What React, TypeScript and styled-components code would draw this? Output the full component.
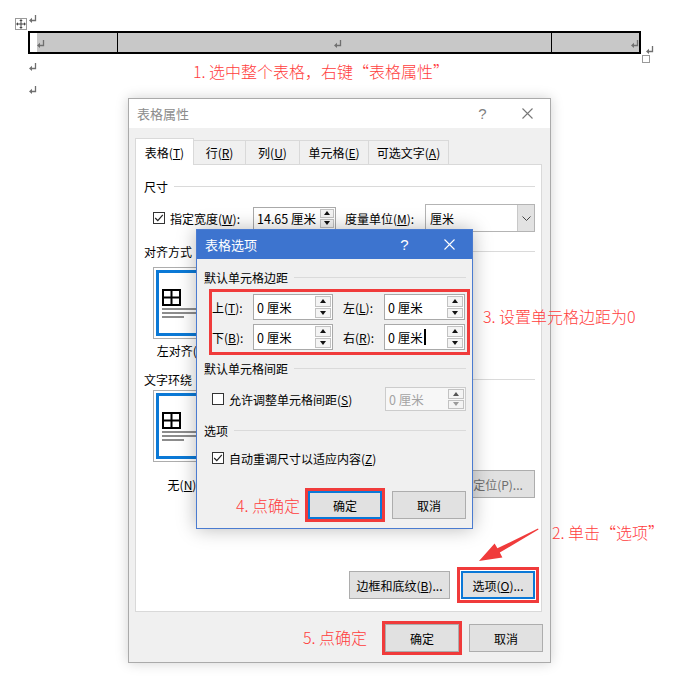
import styled, { createGlobalStyle } from "styled-components";

const markRed = "#f03b3b";
const noteRed = "#ff3d3d";

const GlobalStyle = createGlobalStyle`
  html, body { margin: 0; padding: 0; background: #ffffff; }
  body {
    font-family: "Noto Sans CJK SC", "Liberation Sans", sans-serif;
    font-size: 12px;
    color: #000;
  }
  * { box-sizing: border-box; }
`;

const Page = styled.div`
  position: relative;
  width: 677px;
  height: 679px;
  overflow: hidden;
  background: #fff;
`;

/* ---------- document ---------- */

const Doc = styled.div`
  display: flex;
  flex-direction: column;
  padding: 14px 0 0 28px;
`;

const ParaLine = styled.div<{ $height: number; $top: number }>`
  height: ${(p) => p.$height}px;
  padding: ${(p) => p.$top}px 0 0 1px;
  display: flex;
  align-items: flex-start;
`;

const TableWrap = styled.div`
  position: relative;
  width: 613px;
  height: 23px;
  border: 2px solid #000;
  display: grid;
  grid-template-columns: 87px 434px 1fr;
`;

const Cell = styled.div<{ $lead?: boolean; $align: string }>`
  display: flex;
  justify-content: ${(p) => p.$align};
  align-items: flex-start;
  padding: 7px 0 0 7px;
  background: ${(p) =>
    p.$lead ? "linear-gradient(to right, #fff 7px, #c8c8c8 7px)" : "#c8c8c8"};
  & + & {
    border-left: 1px solid #000;
  }
`;

const MoveHandle = styled.div`
  position: absolute;
  left: -15px;
  top: -15px;
  width: 12px;
  height: 12px;
  border: 1px solid #9a9a9a;
  background: #fff;
  display: flex;
  align-items: center;
  justify-content: center;
`;

const RowEnd = styled.div`
  position: absolute;
  left: 616px;
  top: 7px;
`;

const ResizeHandle = styled.div`
  position: absolute;
  left: 612px;
  top: 22px;
  width: 8px;
  height: 8px;
  border: 1px solid #9a9a9a;
  background: #fff;
`;

/* ---------- dialog chrome ---------- */

const Window = styled.div<{
  $left: number;
  $top: number;
  $width: number;
  $height: number;
  $active?: boolean;
}>`
  position: absolute;
  left: ${(p) => p.$left}px;
  top: ${(p) => p.$top}px;
  width: ${(p) => p.$width}px;
  height: ${(p) => p.$height}px;
  display: flex;
  flex-direction: column;
  background: #f0f0f0;
  border: 1px solid ${(p) => (p.$active ? "#4a7bd0" : "#aaaaaa")};
  box-shadow: ${(p) =>
    p.$active
      ? "0 0 18px rgba(0, 0, 0, 0.28)"
      : "0 0 12px rgba(0, 0, 0, 0.18)"};
`;

const TitleBar = styled.div<{ $active?: boolean }>`
  height: 29px;
  flex: none;
  display: flex;
  align-items: center;
  padding-left: 8px;
  background: ${(p) => (p.$active ? "#3d74cf" : "#ffffff")};
  color: ${(p) => (p.$active ? "#ffffff" : "#8c8c8c")};
  font-size: 13px;
`;

const TitleText = styled.span`
  flex: 1;
`;

const TitleBtn = styled.div<{ $dim?: boolean }>`
  width: 45px;
  height: 100%;
  display: flex;
  align-items: center;
  justify-content: center;
  font-size: 15px;
  font-family: "Liberation Sans", sans-serif;
  color: ${(p) => (p.$dim ? "#808080" : "inherit")};
`;

const OuterBody = styled.div`
  flex: 1;
  display: flex;
  flex-direction: column;
  padding: 10px 8px 0 6px;
`;

const TabRow = styled.div`
  display: flex;
  align-items: flex-end;
  height: 26px;
  flex: none;
`;

const Tab = styled.div<{ $width: number; $active?: boolean }>`
  position: relative;
  z-index: ${(p) => (p.$active ? 2 : 1)};
  width: ${(p) => p.$width}px;
  height: ${(p) => (p.$active ? 27 : 24)}px;
  margin-bottom: ${(p) => (p.$active ? -1 : 0)}px;
  border: 1px solid #d9d9d9;
  border-bottom: none;
  background: ${(p) => (p.$active ? "#ffffff" : "#f0f0f0")};
  display: flex;
  align-items: center;
  justify-content: center;
  & + & {
    margin-left: -1px;
  }
`;

const Panel = styled.div`
  height: 448px;
  flex: none;
  background: #fff;
  border: 1px solid #d9d9d9;
  display: flex;
  flex-direction: column;
  padding: 0 6px 12px 8px;
`;

const Section = styled.div<{ $mt: number }>`
  display: flex;
  align-items: center;
  height: 16px;
  margin-top: ${(p) => p.$mt}px;
  flex: none;
`;

const Rule = styled.div`
  flex: 1;
  height: 1px;
  margin-left: 6px;
  background: #dadada;
`;

const SizeRow = styled.div`
  display: flex;
  align-items: center;
  height: 28px;
  margin-top: 10px;
  padding-left: 9px;
`;

const CheckBox = styled.span<{ $ml?: number }>`
  width: 12px;
  height: 12px;
  flex: none;
  margin-left: ${(p) => p.$ml ?? 0}px;
  border: 1px solid #333;
  background: #fff;
  display: inline-flex;
  align-items: center;
  justify-content: center;
`;

const FieldLabel = styled.span<{ $width?: number; $ml?: number }>`
  flex: none;
  width: ${(p) => (p.$width ? `${p.$width}px` : "auto")};
  margin-left: ${(p) => p.$ml ?? 0}px;
  white-space: nowrap;
`;

const SpinField = styled.div<{ $width: number; $height: number; $ml?: string; $disabled?: boolean }>`
  flex: none;
  display: flex;
  width: ${(p) => p.$width}px;
  height: ${(p) => p.$height}px;
  margin-left: ${(p) => p.$ml ?? "0"};
  border: 1px solid ${(p) => (p.$disabled ? "#cccccc" : "#a9a9a9")};
  background: ${(p) => (p.$disabled ? "#f7f7f7" : "#fff")};
`;

const SpinText = styled.div<{ $disabled?: boolean }>`
  flex: 1;
  display: flex;
  align-items: center;
  padding-left: 3px;
  font-size: 12.5px;
  color: ${(p) => (p.$disabled ? "#a3a3a3" : "#000")};
  white-space: nowrap;
`;

const Caret = styled.span`
  width: 2px;
  height: 16px;
  margin-left: 1px;
  background: #000;
`;

const SpinBtns = styled.div<{ $width: number }>`
  width: ${(p) => p.$width}px;
  flex: none;
  display: flex;
  flex-direction: column;
  padding: 1px;
`;

const SpinBtn = styled.div`
  flex: 1;
  display: flex;
  align-items: center;
  justify-content: center;
  background: #f4f4f4;
  border: 1px solid #c2c2c2;
  & + & {
    margin-top: 1px;
  }
`;

const Select = styled.div`
  flex: none;
  width: 110px;
  height: 28px;
  display: flex;
  border: 1px solid #b4b4b4;
  background: #fff;
`;

const SelectText = styled.div`
  flex: 1;
  display: flex;
  align-items: center;
  padding-left: 4px;
`;

const SelectArrow = styled.div`
  width: 17px;
  display: flex;
  align-items: center;
  justify-content: center;
  background: #e2e2e2;
  border-left: 1px solid #c8c8c8;
`;

const OptionCol = styled.div<{ $mt: number }>`
  width: 58px;
  margin: ${(p) => p.$mt}px 0 0 9px;
  display: flex;
  flex-direction: column;
  align-items: center;
  gap: 3px;
`;

const OptionBox = styled.div`
  width: 58px;
  height: 72px;
  border: 1px solid #adadad;
  padding: 2px;
  background: #fff;
`;

const OptionInner = styled.div`
  height: 100%;
  border: 3px solid #0b79d6;
  display: flex;
  flex-direction: column;
  justify-content: center;
  padding-left: 3px;
  gap: 2px;
`;

const TextBar = styled.div<{ $width: number }>`
  width: ${(p) => p.$width}px;
  height: 2px;
  background: #8c8c8c;
`;

const WrapFoot = styled.div`
  display: flex;
  align-items: center;
  height: 28px;
  margin-top: 8px;
`;

const OptionLabel = styled.span<{ $ml?: number }>`
  width: 58px;
  margin-left: ${(p) => p.$ml ?? 0}px;
  text-align: center;
  white-space: nowrap;
`;

const ButtonRow = styled.div<{ $mt: string; $gap: number }>`
  display: flex;
  justify-content: flex-end;
  align-items: center;
  gap: ${(p) => p.$gap}px;
  margin-top: ${(p) => p.$mt};
`;

const Btn = styled.div<{ $width: number; $default?: boolean; $mark?: number; $dim?: boolean; $ml?: string }>`
  flex: none;
  width: ${(p) => p.$width}px;
  height: 28px;
  margin-left: ${(p) => p.$ml ?? "0"};
  display: flex;
  align-items: center;
  justify-content: center;
  background: #e1e1e1;
  border: ${(p) => (p.$default ? "2px solid #0a78d7" : "1px solid #adadad")};
  color: ${(p) => (p.$dim ? "#6e6e6e" : "#000")};
  outline: ${(p) => (p.$mark !== undefined ? `3px solid ${markRed}` : "none")};
  outline-offset: ${(p) => p.$mark ?? 0}px;
  white-space: nowrap;
`;

const Footer = styled.div`
  display: flex;
  justify-content: flex-end;
  gap: 10px;
  margin: 12px -1px 0 0;
`;

/* ---------- inner dialog ---------- */

const InnerBody = styled.div`
  flex: 1;
  display: flex;
  flex-direction: column;
  padding: 10px 6px 0 7px;
`;

const MarginBox = styled.div`
  width: 261px;
  height: 66px;
  margin: 4px 0 0 5px;
  border: 3px solid ${markRed};
  padding-top: 2px;
  display: flex;
  flex-direction: column;
  gap: 4px;
`;

const MarginRow = styled.div`
  display: flex;
  align-items: center;
  height: 26px;
`;

const CheckRow = styled.div<{ $mt: number; $height: number }>`
  display: flex;
  align-items: center;
  height: ${(p) => p.$height}px;
  margin-top: ${(p) => p.$mt}px;
  padding-left: 8px;
`;

/* ---------- annotations ---------- */

const Note = styled.div<{ $left: number; $top: number }>`
  position: absolute;
  left: ${(p) => p.$left}px;
  top: ${(p) => p.$top}px;
  font-size: 16px;
  line-height: 20px;
  font-weight: 300;
  color: ${noteRed};
  white-space: nowrap;
`;

const ArrowSvg = styled.svg`
  position: absolute;
  left: 470px;
  top: 520px;
`;

/* ---------- icons ---------- */

const ParaMark = () => (
  <svg width="8" height="8" viewBox="0 0 8 8">
    <path d="M6.5 0 V5.5 H2.5" stroke="#6f6f6f" strokeWidth="1.3" fill="none" />
    <path d="M0 5.5 L3 2.8 V8 Z" fill="#6f6f6f" />
  </svg>
);

const MoveIcon = () => (
  <svg width="10" height="10" viewBox="0 0 10 10">
    <path d="M5 1.5 V8.5 M1.5 5 H8.5" stroke="#444" strokeWidth="1" />
    <path d="M5 0 L3.3 2 H6.7 Z M5 10 L3.3 8 H6.7 Z M0 5 L2 3.3 V6.7 Z M10 5 L8 3.3 V6.7 Z" fill="#444" />
  </svg>
);

const CloseIcon = ({ color }: { color: string }) => (
  <svg width="11" height="11" viewBox="0 0 11 11">
    <path d="M0.5 0.5 L10.5 10.5 M10.5 0.5 L0.5 10.5" stroke={color} strokeWidth="1.1" />
  </svg>
);

const CheckIcon = () => (
  <svg width="10" height="10" viewBox="0 0 10 10">
    <path d="M1.2 5 L3.8 7.6 L8.8 1.8" stroke="#222" strokeWidth="1.2" fill="none" />
  </svg>
);

const Tri = ({ up, color = "#111" }: { up?: boolean; color?: string }) => (
  <svg width="6" height="4" viewBox="0 0 6 4">
    <path d={up ? "M3 0 L6 4 H0 Z" : "M0 0 H6 L3 4 Z"} fill={color} />
  </svg>
);

const Chevron = () => (
  <svg width="9" height="5" viewBox="0 0 9 5">
    <path d="M0.5 0.5 L4.5 4.5 L8.5 0.5" stroke="#444" strokeWidth="1" fill="none" />
  </svg>
);

const TableGlyph = () => (
  <svg width="19" height="17" viewBox="0 0 19 17">
    <rect x="1" y="1" width="17" height="15" fill="none" stroke="#000" strokeWidth="2" />
    <path d="M9.5 1 V16 M1 8.5 H18" stroke="#000" strokeWidth="2" />
  </svg>
);

const Spinner = ({ width, disabled }: { width: number; disabled?: boolean }) => (
  <SpinBtns $width={width}>
    <SpinBtn>
      <Tri up color={disabled ? "#555" : "#111"} />
    </SpinBtn>
    <SpinBtn>
      <Tri color={disabled ? "#9a9a9a" : "#111"} />
    </SpinBtn>
  </SpinBtns>
);

const LayoutPreview = () => (
  <OptionBox>
    <OptionInner>
      <TableGlyph />
      <TextBar $width={36} />
      <TextBar $width={36} />
      <TextBar $width={22} />
    </OptionInner>
  </OptionBox>
);

export default function App() {
  return (
    <>
      <GlobalStyle />
      <Page>
        <Doc>
          <ParaLine $height={17} $top={1}>
            <ParaMark />
          </ParaLine>
          <TableWrap>
            <MoveHandle>
              <MoveIcon />
            </MoveHandle>
            <Cell $lead $align="flex-start">
              <ParaMark />
            </Cell>
            <Cell $align="center">
              <ParaMark />
            </Cell>
            <Cell $align="flex-end">
              <ParaMark />
            </Cell>
            <RowEnd>
              <ParaMark />
            </RowEnd>
            <ResizeHandle />
          </TableWrap>
          <ParaLine $height={23} $top={9}>
            <ParaMark />
          </ParaLine>
          <ParaLine $height={23} $top={9}>
            <ParaMark />
          </ParaLine>
        </Doc>

        <Window $left={128} $top={98} $width={423} $height={565}>
          <TitleBar>
            <TitleText>表格属性</TitleText>
            <TitleBtn $dim>?</TitleBtn>
            <TitleBtn>
              <CloseIcon color="#777" />
            </TitleBtn>
          </TitleBar>
          <OuterBody>
            <TabRow>
              <Tab $width={59} $active>
                表格(<u>T</u>)
              </Tab>
              <Tab $width={53}>
                行(<u>R</u>)
              </Tab>
              <Tab $width={55}>
                列(<u>U</u>)
              </Tab>
              <Tab $width={70}>
                单元格(<u>E</u>)
              </Tab>
              <Tab $width={81}>
                可选文字(<u>A</u>)
              </Tab>
            </TabRow>
            <Panel>
              <Section $mt={13}>
                <span>尺寸</span>
                <Rule />
              </Section>
              <SizeRow>
                <CheckBox>
                  <CheckIcon />
                </CheckBox>
                <FieldLabel $width={83} $ml={5}>
                  指定宽度(<u>W</u>):
                </FieldLabel>
                <SpinField $width={83} $height={23}>
                  <SpinText>14.65 厘米</SpinText>
                  <Spinner width={16} />
                </SpinField>
                <FieldLabel $width={80} $ml={9}>
                  度量单位(<u>M</u>):
                </FieldLabel>
                <Select>
                  <SelectText>厘米</SelectText>
                  <SelectArrow>
                    <Chevron />
                  </SelectArrow>
                </Select>
              </SizeRow>
              <Section $mt={11}>
                <span>对齐方式</span>
                <Rule />
              </Section>
              <OptionCol $mt={8}>
                <LayoutPreview />
                <OptionLabel>
                  左对齐(<u>L</u>)
                </OptionLabel>
              </OptionCol>
              <Section $mt={12}>
                <span>文字环绕</span>
                <Rule />
              </Section>
              <OptionCol $mt={3}>
                <LayoutPreview />
              </OptionCol>
              <WrapFoot>
                <OptionLabel $ml={9}>
                  无(<u>N</u>)
                </OptionLabel>
                <Btn $width={74} $dim $ml="auto">
                  定位(P)...
                </Btn>
              </WrapFoot>
              <ButtonRow $mt="auto" $gap={11}>
                <Btn $width={101}>
                  边框和底纹(<u>B</u>)...
                </Btn>
                <Btn $width={74} $default $mark={1}>
                  选项(<u>O</u>)...
                </Btn>
              </ButtonRow>
            </Panel>
            <Footer>
              <Btn $width={74} $mark={0}>
                确定
              </Btn>
              <Btn $width={74}>取消</Btn>
            </Footer>
          </OuterBody>
        </Window>

        <Window $left={196} $top={229} $width={277} $height={300} $active>
          <TitleBar $active>
            <TitleText>表格选项</TitleText>
            <TitleBtn>?</TitleBtn>
            <TitleBtn>
              <CloseIcon color="#fff" />
            </TitleBtn>
          </TitleBar>
          <InnerBody>
            <Section $mt={0}>
              <span>默认单元格边距</span>
              <Rule />
            </Section>
            <MarginBox>
              <MarginRow>
                <FieldLabel $width={41}>
                  上(<u>T</u>):
                </FieldLabel>
                <SpinField $width={80} $height={26}>
                  <SpinText>0 厘米</SpinText>
                  <Spinner width={18} />
                </SpinField>
                <FieldLabel $width={41} $ml={10}>
                  左(<u>L</u>):
                </FieldLabel>
                <SpinField $width={81} $height={26}>
                  <SpinText>0 厘米</SpinText>
                  <Spinner width={18} />
                </SpinField>
              </MarginRow>
              <MarginRow>
                <FieldLabel $width={41}>
                  下(<u>B</u>):
                </FieldLabel>
                <SpinField $width={80} $height={26}>
                  <SpinText>0 厘米</SpinText>
                  <Spinner width={18} />
                </SpinField>
                <FieldLabel $width={41} $ml={10}>
                  右(<u>R</u>):
                </FieldLabel>
                <SpinField $width={81} $height={26}>
                  <SpinText>
                    0 厘米
                    <Caret />
                  </SpinText>
                  <Spinner width={18} />
                </SpinField>
              </MarginRow>
            </MarginBox>
            <Section $mt={5}>
              <span>默认单元格间距</span>
              <Rule />
            </Section>
            <CheckRow $mt={11} $height={24}>
              <CheckBox />
              <FieldLabel $ml={5}>
                允许调整单元格间距(<u>S</u>)
              </FieldLabel>
              <SpinField $width={81} $height={24} $ml="auto" $disabled>
                <SpinText $disabled>0 厘米</SpinText>
                <Spinner width={18} disabled />
              </SpinField>
            </CheckRow>
            <Section $mt={11}>
              <span>选项</span>
              <Rule />
            </Section>
            <CheckRow $mt={12} $height={16}>
              <CheckBox>
                <CheckIcon />
              </CheckBox>
              <FieldLabel $ml={5}>
                自动重调尺寸以适应内容(<u>Z</u>)
              </FieldLabel>
            </CheckRow>
            <ButtonRow $mt="25px" $gap={10}>
              <Btn $width={74} $default $mark={0}>
                确定
              </Btn>
              <Btn $width={74}>取消</Btn>
            </ButtonRow>
          </InnerBody>
        </Window>

        <Note $left={193} $top={61}>1. 选中整个表格，右键“表格属性”</Note>
        <Note $left={483} $top={306}>3. 设置单元格边距为0</Note>
        <Note $left={236} $top={495}>4. 点确定</Note>
        <Note $left={552} $top={522}>2. 单击“选项”</Note>
        <Note $left={303} $top={627}>5. 点确定</Note>

        <ArrowSvg width="75" height="50" viewBox="0 0 75 50">
          <polygon
            points="9,41 24.6,23.5 27.4,28.3 68,8.6 68.5,9.6 29.8,32.6 32.4,37.6"
            fill={markRed}
          />
        </ArrowSvg>
      </Page>
    </>
  );
}
